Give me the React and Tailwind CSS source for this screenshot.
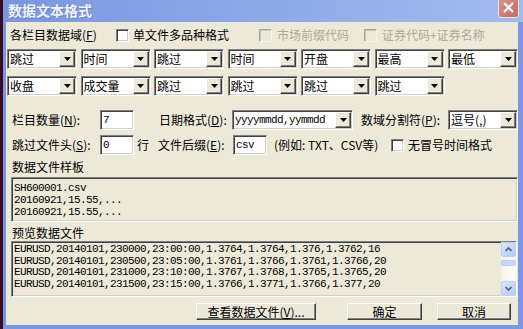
import React from 'react';

const cjk = "font-['Noto_Sans_CJK_SC',sans-serif]";
const mono = "font-['Liberation_Mono','Noto_Sans_CJK_SC',monospace]";
const sunken =
  'border border-t-[#808080] border-l-[#808080] border-b-white border-r-white shadow-[inset_1px_1px_0_#404040,inset_-1px_-1px_0_#d4d0c8]';
const raised =
  'border border-t-white border-l-white border-b-[#404040] border-r-[#404040] shadow-[inset_-1px_-1px_0_#808080,inset_1px_1px_0_#e8e6de]';

const Key = ({ k }) => (
  <>
    (<span className="underline underline-offset-1">{k}</span>)
  </>
);

const Combo = ({ value, w = 'w-[70px]', isMono }) => (
  <div className={`${w} h-[20px] shrink-0 flex items-center bg-white ${sunken}`}>
    <span className={`flex-1 pl-[2px] whitespace-nowrap overflow-hidden leading-[16px] ${isMono ? `${mono} text-[11px] tracking-[-0.6px]` : 'text-[12px]'}`}>
      {value}
    </span>
    <div className={`w-[16px] h-[16px] mr-[1px] flex items-center justify-center bg-[#ece9d8] ${raised}`}>
      <svg width="7" height="4" viewBox="0 0 7 4">
        <path d="M0 0h7L3.5 4z" fill="#000" />
      </svg>
    </div>
  </div>
);

const Check = ({ disabled }) =>
  disabled ? (
    <div className="w-[13px] h-[13px] shrink-0 border border-t-[#a8a69a] border-l-[#a8a69a] border-b-[#f4f3ee] border-r-[#f4f3ee] bg-[#ece9d8] shadow-[inset_1px_1px_0_#c8c6ba]" />
  ) : (
    <div className={`w-[13px] h-[13px] shrink-0 bg-white ${sunken}`} />
  );

const Field = ({ value, w = 'w-[34px]' }) => (
  <div className={`${w} h-[20px] shrink-0 flex items-center bg-white pl-[2px] ${sunken}`}>
    <span className={`${mono} text-[11px] tracking-[-0.6px] leading-[16px]`}>{value}</span>
  </div>
);

const Button = ({ w, children }) => (
  <div className={`${w} h-[17px] shrink-0 flex items-center justify-center bg-[#ece9d8] text-[12px] leading-[15px] ${raised}`}>
    <span className="whitespace-nowrap">{children}</span>
  </div>
);

const row1 = ['跳过', '时间', '跳过', '时间', '开盘', '最高', '最低'];
const row2 = ['收盘', '成交量', '跳过', '跳过', '跳过', '跳过'];

const preview = [
  'EURUSD,20140101,230000,23:00:00,1.3764,1.3764,1.376,1.3762,16',
  'EURUSD,20140101,230500,23:05:00,1.3761,1.3766,1.3761,1.3766,20',
  'EURUSD,20140101,231000,23:10:00,1.3767,1.3768,1.3765,1.3765,20',
  'EURUSD,20140101,231500,23:15:00,1.3766,1.3771,1.3766,1.377,20',
];

const ScrollBtn = ({ up }) => (
  <div className="w-[15px] h-[15px] rounded-[2px] border border-[#b9cdf6] bg-gradient-to-br from-[#dce7fd] to-[#b4c9f6] flex items-center justify-center">
    <svg width="7" height="5" viewBox="0 0 7 5">
      <path d={up ? 'M0.5 4L3.5 1L6.5 4' : 'M0.5 1L3.5 4L6.5 1'} stroke="#4d6185" strokeWidth="1.6" fill="none" />
    </svg>
  </div>
);

export default function App() {
  return (
    <div className={`w-[523px] h-[329px] flex overflow-hidden bg-[#2a0a16] ${cjk} text-black`}>
      <div className="w-[3px] shrink-0 bg-[#3b0c1c]" />
      <div className="flex-1 flex flex-col bg-[#7b96e2]">
        {/* title bar */}
        <div className="h-[22px] shrink-0 flex items-start bg-gradient-to-r from-[#7a96e0] to-[#a3bbef]">
          <span className="pl-[5px] pt-[3px] text-[14px] leading-[15px] font-bold text-[#eef2fc] [text-shadow:1px_1px_0_#6a83c9]">
            数据文本格式
          </span>
          <div className="ml-auto mr-[4px] -mt-[3px] w-[21px] h-[21px] rounded-[3px] border border-[#f1dcdc] bg-gradient-to-br from-[#d69592] to-[#c26c69] flex items-center justify-center">
            <svg width="11" height="11" viewBox="0 0 11 11">
              <path d="M1 1L10 10M10 1L1 10" stroke="#fff" strokeWidth="2" />
            </svg>
          </div>
        </div>

        {/* body */}
        <div className="flex-1 ml-[3px] mr-[5px] mb-[4px] bg-[#ece9d8] flex flex-col text-[12px] leading-[14px]">
          <div className="mt-[6px] h-[14px] flex items-center pl-[4px]">
            <span className="w-[106px] whitespace-nowrap">
              各栏目数据域<Key k="F" />
            </span>
            <Check />
            <span className="ml-[4px] w-[126px]">单文件多品种格式</span>
            <Check disabled />
            <span className="ml-[5px] w-[87px] text-[#aca899]">市场前缀代码</span>
            <Check disabled />
            <span className="ml-[5px] text-[#aca899]">证券代码+证券名称</span>
          </div>

          <div className="mt-[7px] pl-[1px] flex gap-[3.5px]">
            {row1.map((v, i) => (
              <Combo key={i} value={v} />
            ))}
          </div>
          <div className="mt-[7px] pl-[1px] flex gap-[3.5px]">
            {row2.map((v, i) => (
              <Combo key={i} value={v} />
            ))}
          </div>

          <div className="mt-[14px] h-[20px] flex items-center pl-[6px]">
            <span className="w-[88px] whitespace-nowrap">
              栏目数量<Key k="N" />:
            </span>
            <Field value="7" />
            <span className="ml-[25px] w-[73px] whitespace-nowrap">
              日期格式<Key k="D" />:
            </span>
            <Combo value="yyyymmdd,yymmdd" w="w-[121px]" isMono />
            <span className="ml-[8px] w-[87px] whitespace-nowrap">
              数域分割符<Key k="P" />:
            </span>
            <Combo value="逗号(,)" />
          </div>

          <div className="mt-[5px] h-[20px] flex items-center pl-[6px]">
            <span className="w-[88px] whitespace-nowrap">
              跳过文件头<Key k="S" />:
            </span>
            <Field value="0" />
            <span className="ml-[3px]">行</span>
            <span className="ml-[9px] w-[75px] whitespace-nowrap">
              文件后缀<Key k="E" />:
            </span>
            <Field value="csv" />
            <span className="ml-[7px] w-[117px] whitespace-nowrap">(例如: TXT、CSV等)</span>
            <Check />
            <span className="ml-[4px]">无冒号时间格式</span>
          </div>

          <div className="mt-[5px] h-[14px] flex items-center pl-[6px]">数据文件样板</div>
          <div className={`mt-[3px] ml-[5px] h-[45px] pl-[2px] pt-[4px] overflow-hidden ${sunken} ${mono} text-[11px] tracking-[-0.6px] leading-[12px]`}>
            <div>SH600001.csv</div>
            <div>20160921,15.55,...</div>
            <div>20160921,15.55,...</div>
          </div>

          <div className="mt-[4px] h-[14px] flex items-center pl-[6px]">预览数据文件</div>
          <div className={`mt-[1px] ml-[5px] mr-[1px] h-[56px] flex ${sunken}`}>
            <div className={`flex-1 pl-[2px] pt-[2px] overflow-hidden ${mono} text-[11px] tracking-[-0.6px] leading-[11.6px]`}>
              {preview.map((l, i) => (
                <div key={i} className="whitespace-nowrap">
                  {l}
                </div>
              ))}
            </div>
            <div className="w-[15px] flex flex-col bg-gradient-to-r from-[#f3f1ea] to-[#fdfdfa]">
              <ScrollBtn up />
              <div className="mt-[3px] h-[6px] rounded-[2px] border border-[#b9cdf6] bg-[#c8d8fb]" />
              <div className="flex-1" />
              <ScrollBtn />
            </div>
          </div>

          <div className="mt-[6px] flex pl-[190px]">
            <Button w="w-[120px]">
              查看数据文件<Key k="V" />...
            </Button>
            <div className="ml-[31px]">
              <Button w="w-[75px]">确定</Button>
            </div>
            <div className="ml-[15px]">
              <Button w="w-[74px]">取消</Button>
            </div>
          </div>
        </div>
      </div>
    </div>
  );
}
